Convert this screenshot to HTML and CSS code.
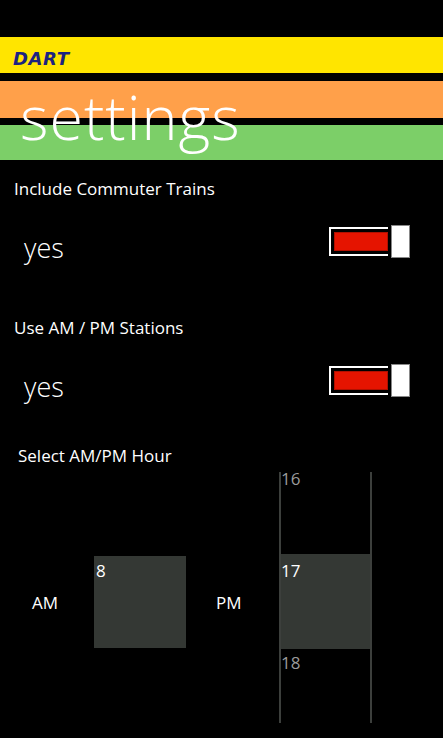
FILE: index.html
```html
<!DOCTYPE html>
<html lang="en">
<head>
  <meta charset="UTF-8" />
  <meta name="viewport" content="width=device-width, initial-scale=1" />
  <title>DART - settings</title>
  <link rel="stylesheet" href="styles.css">
</head>
<body>
  <div class="page">
    <header class="title-panel">
      <div class="app-band">
        <span class="app-name">DART</span>
      </div>
      <h1 class="page-title">settings</h1>
    </header>

    <section class="setting">
      <div class="setting-label">Include Commuter Trains</div>
      <div class="setting-row">
        <span class="setting-value">yes</span>
        <div class="toggle is-on">
          <div class="toggle-track"><div class="toggle-fill"></div></div>
          <div class="toggle-thumb"></div>
        </div>
      </div>
    </section>

    <section class="setting">
      <div class="setting-label">Use AM / PM Stations</div>
      <div class="setting-row">
        <span class="setting-value">yes</span>
        <div class="toggle is-on">
          <div class="toggle-track"><div class="toggle-fill"></div></div>
          <div class="toggle-thumb"></div>
        </div>
      </div>
    </section>

    <section class="hours">
      <div class="hours-label">Select AM/PM Hour</div>
      <div class="hours-row">
        <span class="hours-period am">AM</span>
        <div class="hour-box">8</div>
        <span class="hours-period pm">PM</span>
        <div class="hour-loop">
          <div class="hour-item prev">16</div>
          <div class="hour-item selected">17</div>
          <div class="hour-item next">18</div>
        </div>
      </div>
    </section>
  </div>
</body>
</html>
```

FILE: styles.css
```css
body {
  margin: 0;
  background: #000;
  color: #fff;
  font-family: 'Open Sans', sans-serif;
}
.page {
  width: 443px;
  height: 738px;
  overflow: hidden;
}
.title-panel {
  padding-top: 37px;
}
.app-band {
  height: 36px;
  background: #ffe500;
  margin-bottom: 8px;
  padding-left: 13px;
}
.app-name {
  display: inline-block;
  font-family: 'DejaVu Sans', sans-serif;
  font-size: 18px;
  font-weight: bold;
  font-style: italic;
  letter-spacing: 0.6px;
  color: #1c2380;
  line-height: 36px;
  padding-top: 4px;
}
.page-title {
  margin: 0;
  height: 79px;
  padding-left: 20px;
  font-size: 61px;
  font-weight: 300;
  letter-spacing: 1px;
  line-height: 71px;
  background: linear-gradient(to bottom, #ffa04a 0, #ffa04a 37px, #000 37px, #000 44px, #7ccf68 44px, #7ccf68 79px);
}
.setting {
  padding-top: 18px;
}
.setting-label, .hours-label {
  font-size: 17px;
  line-height: 22px;
  padding-left: 14px;
}
.setting-row {
  height: 99px;
  display: flex;
  justify-content: space-between;
  align-items: flex-start;
  padding: 0 33px 0 24px;
}
.setting-value {
  margin-top: 31px;
  font-size: 27px;
  font-weight: 300;
  line-height: 34px;
}
.toggle {
  margin-top: 25px;
  display: flex;
  gap: 3px;
}
.toggle-track {
  margin-top: 2px;
  width: 54px;
  height: 22px;
  border: 2px solid #fff;
  border-right: none;
  padding: 3px 0 0 3px;
}
.toggle-fill {
  height: 19px;
  background: #e51400;
  box-shadow: inset 0 0 0 1px #b01000;
}
.toggle-thumb {
  width: 17px;
  height: 31px;
  background: #fff;
  border: 1px solid #888;
}
.hours {
  padding-top: 7px;
}
.hours-label {
  padding-left: 18px;
}
.hours-row {
  margin-top: 5px;
  height: 251px;
  display: flex;
  align-items: flex-start;
}
.hours-period {
  margin-top: 120px;
  font-size: 17px;
  line-height: 22px;
}
.am {
  margin-left: 32px;
  width: 62px;
}
.pm {
  width: 63px;
}
.hour-box {
  margin-top: 84px;
  margin-right: 30px;
  width: 90px;
  height: 84px;
  padding: 8px 0 0 2px;
  background: #343834;
  font-size: 17px;
  line-height: 14px;
}
.hour-loop {
  width: 89px;
  height: 251px;
  border-left: 2px solid #3c3f3c;
  border-right: 2px solid #3c3f3c;
  display: flex;
  flex-direction: column;
}
.hour-item {
  padding-left: 0;
  font-size: 17px;
  line-height: 14px;
  color: #9a9a9a;
}
.hour-item.prev {
  height: 82px;
}
.hour-item.selected {
  height: 85px;
  padding-top: 10px;
  background: #343834;
  color: #fff;
}
.hour-item.next {
  flex: 1;
  padding-top: 7px;
}
```
